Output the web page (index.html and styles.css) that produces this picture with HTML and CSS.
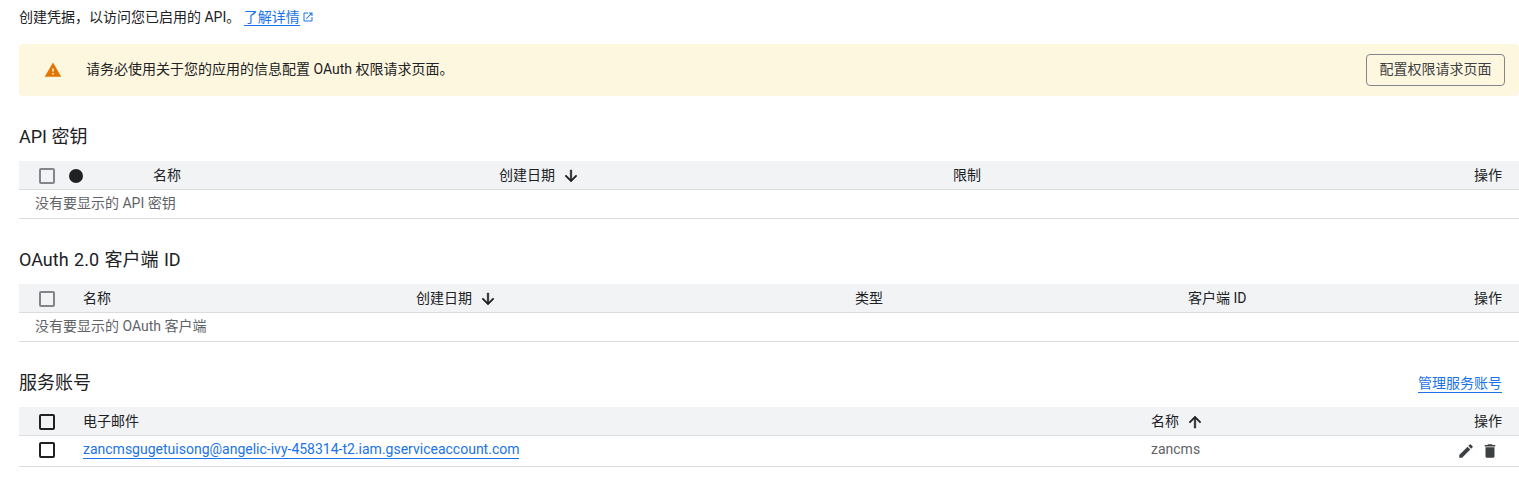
FILE: index.html
```html
<!DOCTYPE html>
<html lang="zh-CN">
<head>
<meta charset="utf-8">
<title>凭据</title>
<link rel="stylesheet" href="styles.css">
</head>
<body>
<main class="page">
  <p class="intro">创建凭据，以访问您已启用的 API。 <a class="link" href="#">了解详情</a><svg class="ext" viewBox="0 0 24 24"><path d="M19 19H5V5h7V3H5a2 2 0 0 0-2 2v14a2 2 0 0 0 2 2h14a2 2 0 0 0 2-2v-7h-2v7zM14 3v2h3.59l-9.83 9.83 1.41 1.41L19 6.41V10h2V3h-7z"/></svg></p>

  <div class="banner">
    <svg class="warn" viewBox="0 0 24 24"><path d="M1 21h22L12 2 1 21zm12-3h-2v-2h2v2zm0-4h-2v-4h2v4z"/></svg>
    <span class="banner-text">请务必使用关于您的应用的信息配置 OAuth 权限请求页面。</span>
    <button class="btn">配置权限请求页面</button>
  </div>

  <section class="section first">
    <div class="sec-head"><h2>API 密钥</h2></div>
    <div class="row head cols-api">
      <span class="cb grey"></span>
      <span class="dot"></span>
      <span>名称</span>
      <span class="sort">创建日期<svg class="arrow" viewBox="0 0 24 24"><path d="M20 12l-1.41-1.41L13 16.17V4h-2v12.17l-5.58-5.59L4 12l8 8 8-8z"/></svg></span>
      <span>限制</span>
      <span class="act">操作</span>
    </div>
    <div class="row empty">没有要显示的 API 密钥</div>
  </section>

  <section class="section">
    <div class="sec-head"><h2 class="spaced">OAuth 2.0 客户端 ID</h2></div>
    <div class="row head cols-oauth">
      <span class="cb grey"></span>
      <span>名称</span>
      <span class="sort">创建日期<svg class="arrow" viewBox="0 0 24 24"><path d="M20 12l-1.41-1.41L13 16.17V4h-2v12.17l-5.58-5.59L4 12l8 8 8-8z"/></svg></span>
      <span>类型</span>
      <span>客户端 ID</span>
      <span class="act">操作</span>
    </div>
    <div class="row empty">没有要显示的 OAuth 客户端</div>
  </section>

  <section class="section">
    <div class="sec-head"><h2>服务账号</h2><a class="link manage" href="#">管理服务账号</a></div>
    <div class="row head cols-sa">
      <span class="cb"></span>
      <span>电子邮件</span>
      <span class="sort">名称<svg class="arrow" viewBox="0 0 24 24"><path d="M4 12l1.41 1.41L11 7.83V20h2V7.83l5.58 5.59L20 12l-8-8-8 8z"/></svg></span>
      <span class="act">操作</span>
    </div>
    <div class="row data cols-sa">
      <span class="cb"></span>
      <a class="link" href="#">zancmsgugetuisong@angelic-ivy-458314-t2.iam.gserviceaccount.com</a>
      <span class="muted">zancms</span>
      <span class="actions">
        <svg class="tool" viewBox="0 0 24 24"><path d="M3 17.25V21h3.75L17.81 9.94l-3.75-3.75L3 17.25zM20.71 7.04a1 1 0 0 0 0-1.41l-2.34-2.34a1 1 0 0 0-1.41 0l-1.83 1.83 3.75 3.75 1.83-1.83z"/></svg>
        <svg class="tool" viewBox="0 0 24 24"><path d="M6 19c0 1.1.9 2 2 2h8c1.1 0 2-.9 2-2V7H6v12zM19 4h-3.5l-1-1h-5l-1 1H5v2h14V4z"/></svg>
      </span>
    </div>
  </section>
</main>
</body>
</html>
```
FILE: styles.css
```css
* { box-sizing: border-box; }
html, body { margin: 0; padding: 0; background: #fff; }
body {
  font-family: Roboto, "Noto Sans CJK SC", sans-serif;
  font-size: 14px;
  color: #202124;
  overflow: hidden;
}
.page { padding: 0 0 0 19px; }
.intro {
  margin: 0;
  height: 44px;
  padding-top: 8px;
  font-size: 14px;
  line-height: 18px;
}
.link { color: #1a73e8; text-decoration: none; border-bottom: 1px solid #1a73e8; }
.ext { width: 12px; height: 12px; fill: #1a73e8; margin-left: 2px; vertical-align: -1px; }
.banner {
  height: 52px;
  background: #fef7e0;
  border-radius: 4px;
  display: flex;
  align-items: center;
  padding: 0 14px 0 25px;
}
.warn { width: 18px; height: 18px; fill: #e37400; flex: none; }
.banner-text { margin-left: 24px; flex: 1; padding-bottom: 4px; }
.btn {
  width: 139px;
  height: 32px;
  background: transparent;
  border: 1px solid #80868b;
  border-radius: 4px;
  color: #3c4043;
  font: inherit;
  padding: 0 0 4px;
}
.sec-head {
  height: 65px;
  display: flex;
  align-items: flex-end;
  justify-content: space-between;
  padding: 0 17px 12px 0;
}
h2 { margin: 0; font-size: 18px; font-weight: 400; line-height: 24px; color: #202124; }
h2.spaced { word-spacing: 1px; }
.manage { line-height: 17px; margin-bottom: 2px; }
.row { display: grid; align-items: center; padding: 0 17px 0 20px; border-bottom: 1px solid #dadce0; }
.head { height: 29px; background: #f1f3f4; }
.head > span:not(.cb):not(.dot) { padding-bottom: 2px; }
.empty { display: block; height: 29px; line-height: 27px; padding-left: 16px; color: #5f6368; }
.data { height: 31px; padding-bottom: 4px; }
.cols-api { grid-template-columns: 30px 84px 346px 454px 1fr 60px; }
.cols-oauth { grid-template-columns: 44px 333px 439px 333px 1fr 60px; }
.cols-sa { grid-template-columns: 44px 1068px 1fr 60px; }
.cb { display: block; width: 16px; height: 16px; border: 2px solid #202124; border-radius: 2px; margin-top: 2px; }
.cb.grey { border-color: #80868b; }
.dot { display: block; width: 14px; height: 14px; border-radius: 50%; background: #202124; margin-top: 2px; }
.sort { display: flex; align-items: center; }
.arrow { width: 18px; height: 18px; fill: #202124; stroke: #202124; stroke-width: 0.7px; margin-left: 7px; margin-top: 4px; }
.act { text-align: right; }
.muted { color: #5f6368; }
.actions { display: flex; justify-content: flex-end; gap: 6px; padding: 4px 3px 0 0; }
.tool { width: 18px; height: 18px; fill: #3c4043; display: block; }
.data .link { justify-self: start; line-height: 18px; }
```
